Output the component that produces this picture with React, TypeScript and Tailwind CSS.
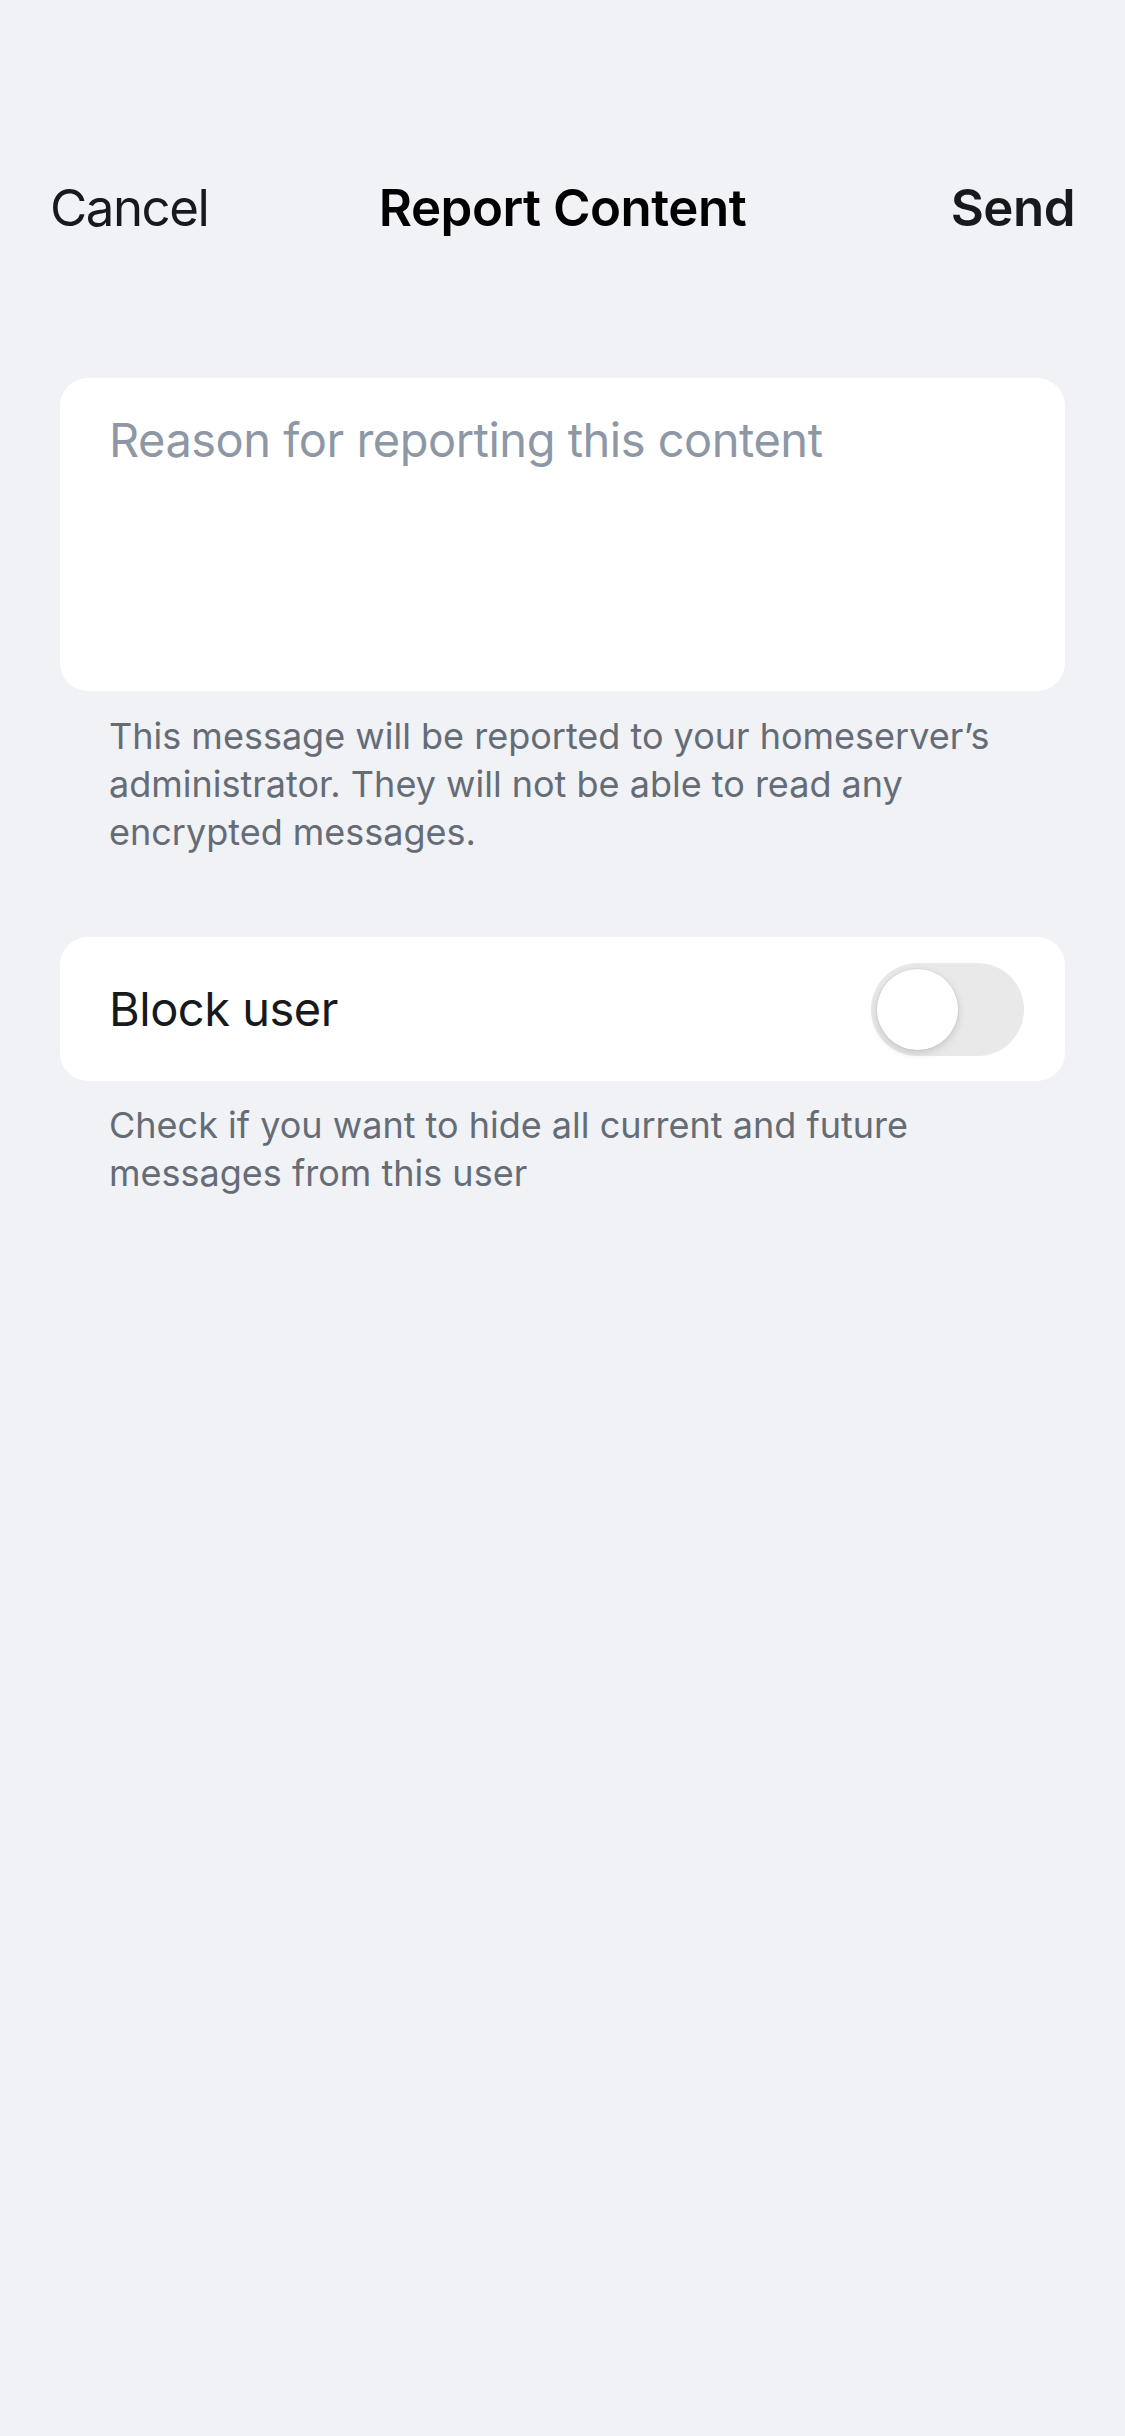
import React, { useState } from "react";

const font = { fontFamily: "Inter, 'Noto Sans', sans-serif" };

const Toggle = ({ on, onChange }: { on: boolean; onChange: (v: boolean) => void }) => {
  return (
    <button
      type="button"
      onClick={() => onChange(!on)}
      className={`relative w-[153px] h-[93px] rounded-full shrink-0 ${on ? "bg-[#0dbd8b]" : "bg-[#e9e9ea]"}`}
    >
      <span
        className={`absolute top-[6px] w-[81px] h-[81px] rounded-full bg-white shadow-[0_3px_8px_rgba(0,0,0,0.15),0_0_0_1px_rgba(0,0,0,0.04)] ${
          on ? "left-[66px]" : "left-[6px]"
        }`}
      />
    </button>
  );
};

const App = () => {
  const [blockUser, setBlockUser] = useState<boolean>(false);
  const [reason, setReason] = useState<string>("");

  return (
    <div className="min-h-[2436px] w-[1125px] bg-[#f0f2f6]" style={font}>
      {/* nav bar */}
      <div className="grid grid-cols-[1fr_auto_1fr] items-center px-[50px] pt-[177px] text-[51px] leading-[61px] text-[#17191c]">
        <button className="justify-self-start tracking-[-1.5px]">Cancel</button>
        <h1 className="font-semibold text-black tracking-[-0.5px]">Report Content</h1>
        <button className="justify-self-end font-semibold tracking-[-0.5px]">Send</button>
      </div>

      <div className="px-[60px] pt-[140px]">
        <div className="bg-white rounded-[28px] h-[313px] pl-[49px] pr-[50px] pt-[34px]">
          <textarea
            value={reason}
            onChange={(e) => setReason(e.target.value)}
            placeholder="Reason for reporting this content"
            className="w-full h-[250px] resize-none bg-transparent outline-none text-[47px] leading-[56px] tracking-[-0.5px] text-[#17191c] placeholder:text-[#8d97a5]"
          />
        </div>
        <p className="pl-[49px] pr-[50px] mt-[21px] text-[36px] leading-[48px] text-[#656c76]">
          This message will be reported to your homeserver’s administrator. They will not be able to read any
          encrypted messages.
        </p>

        <div className="mt-[81px] bg-white rounded-[28px] h-[144px] pl-[49px] pr-[41px] flex items-center justify-between">
          <span className="text-[47px] tracking-[-0.5px] text-[#17191c]">Block user</span>
          <Toggle on={blockUser} onChange={setBlockUser} />
        </div>
        <p className="pl-[49px] pr-[50px] mt-[20px] text-[36px] leading-[48px] text-[#656c76]">
          Check if you want to hide all current and future messages from this user
        </p>
      </div>
    </div>
  );
};

export default App;
